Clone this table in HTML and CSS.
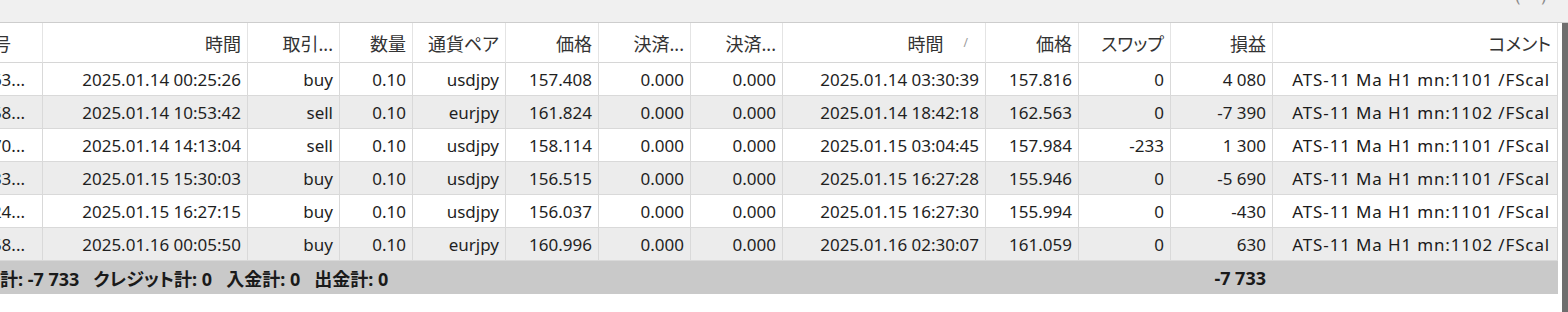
FILE: index.html
```html
<!DOCTYPE html>
<html lang="ja">
<head>
<meta charset="utf-8">
<title>口座履歴</title>
<link rel="stylesheet" href="styles.css">
</head>
<body>
<div class="topbar"><span class="topmark">(&nbsp;&nbsp;&nbsp;&nbsp;&nbsp;)</span></div>
<div class="view">
  <div class="grid">
    <div class="c h first">番号</div>
    <div class="c h">時間</div>
    <div class="c h">取引...</div>
    <div class="c h">数量</div>
    <div class="c h">通貨ペア</div>
    <div class="c h">価格</div>
    <div class="c h">決済...</div>
    <div class="c h">決済...</div>
    <div class="c h sorted">時間<span class="sort">/</span></div>
    <div class="c h">価格</div>
    <div class="c h">スワップ</div>
    <div class="c h">損益</div>
    <div class="c h">コメント</div>

    <div class="c first">63...</div><div class="c">2025.01.14 00:25:26</div><div class="c">buy</div><div class="c">0.10</div><div class="c">usdjpy</div><div class="c">157.408</div><div class="c">0.000</div><div class="c">0.000</div><div class="c">2025.01.14 03:30:39</div><div class="c">157.816</div><div class="c">0</div><div class="c">4 080</div><div class="c note">ATS-11 Ma H1 mn:1101 /FScal</div>

    <div class="c alt first">58...</div><div class="c alt">2025.01.14 10:53:42</div><div class="c alt">sell</div><div class="c alt">0.10</div><div class="c alt">eurjpy</div><div class="c alt">161.824</div><div class="c alt">0.000</div><div class="c alt">0.000</div><div class="c alt">2025.01.14 18:42:18</div><div class="c alt">162.563</div><div class="c alt">0</div><div class="c alt">-7 390</div><div class="c alt note">ATS-11 Ma H1 mn:1102 /FScal</div>

    <div class="c first">70...</div><div class="c">2025.01.14 14:13:04</div><div class="c">sell</div><div class="c">0.10</div><div class="c">usdjpy</div><div class="c">158.114</div><div class="c">0.000</div><div class="c">0.000</div><div class="c">2025.01.15 03:04:45</div><div class="c">157.984</div><div class="c">-233</div><div class="c">1 300</div><div class="c note">ATS-11 Ma H1 mn:1101 /FScal</div>

    <div class="c alt first">33...</div><div class="c alt">2025.01.15 15:30:03</div><div class="c alt">buy</div><div class="c alt">0.10</div><div class="c alt">usdjpy</div><div class="c alt">156.515</div><div class="c alt">0.000</div><div class="c alt">0.000</div><div class="c alt">2025.01.15 16:27:28</div><div class="c alt">155.946</div><div class="c alt">0</div><div class="c alt">-5 690</div><div class="c alt note">ATS-11 Ma H1 mn:1101 /FScal</div>

    <div class="c first">24...</div><div class="c">2025.01.15 16:27:15</div><div class="c">buy</div><div class="c">0.10</div><div class="c">usdjpy</div><div class="c">156.037</div><div class="c">0.000</div><div class="c">0.000</div><div class="c">2025.01.15 16:27:30</div><div class="c">155.994</div><div class="c">0</div><div class="c">-430</div><div class="c note">ATS-11 Ma H1 mn:1101 /FScal</div>

    <div class="c alt first">58...</div><div class="c alt">2025.01.16 00:05:50</div><div class="c alt">buy</div><div class="c alt">0.10</div><div class="c alt">eurjpy</div><div class="c alt">160.996</div><div class="c alt">0.000</div><div class="c alt">0.000</div><div class="c alt">2025.01.16 02:30:07</div><div class="c alt">161.059</div><div class="c alt">0</div><div class="c alt">630</div><div class="c alt note">ATS-11 Ma H1 mn:1102 /FScal</div>

    <div class="f summary"><span class="item">計: -7 733</span><span class="item">クレジット計: 0</span><span class="item">入金計: 0</span><span class="item">出金計: 0</span></div>
    <div class="f total">-7 733</div>
    <div class="f"></div>
  </div>
  <div class="gutter"></div>
  <div class="rail"></div>
</div>
</body>
</html>
```

FILE: styles.css
```css
html, body {
  margin: 0;
  padding: 0;
}
body {
  width: 1568px;
  height: 312px;
  overflow: hidden;
  background: #ffffff;
  font-family: "Noto Sans", "Noto Sans CJK JP", sans-serif;
  font-size: 17px;
  color: #1f1f1f;
  font-feature-settings: "palt";
}
.topbar {
  height: 22px;
  background: #f0f0f0;
  border-bottom: 1px solid #cdcdcd;
  display: flex;
  justify-content: flex-end;
  align-items: flex-start;
  padding-right: 22px;
  overflow: hidden;
}
.topmark {
  font-size: 16px;
  line-height: 16px;
  margin-top: -12px;
  color: #8a8a8a;
}
.view {
  display: flex;
  height: 289px;
}
.grid {
  width: 1558px;
  display: grid;
  grid-template-columns: 43px 205px 92px 73px 93px 93px 92px 92px 203px 93px 92px 102px 285px;
  grid-template-rows: 40px repeat(6, 33px) 33px;
  align-content: start;
}
.c {
  box-sizing: border-box;
  display: flex;
  align-items: center;
  justify-content: flex-end;
  padding-right: 6px;
  border-right: 1px solid #d9d9d9;
  border-bottom: 1px solid #d9d9d9;
  white-space: nowrap;
  overflow: hidden;
  background: #ffffff;
}
.c.alt {
  background: #ececec;
}
.c.note {
  letter-spacing: 0.85px;
  padding-right: 7px;
  color: #1a1a1a;
}
.c.h {
  color: #333333;
  font-size: 18px;
  border-right-color: #e4e4e4;
  border-bottom-color: #d6d6d6;
}
.c.first {
  padding-right: 17px;
}
.c.h.first {
  padding-right: 31px;
}
.c.sorted {
  padding-right: 17px;
}
.sort {
  font-size: 12px;
  color: #9a9a9a;
  margin-left: 20px;
}
.f {
  background: #c9c9c9;
  display: flex;
  align-items: center;
  font-weight: 700;
  font-size: 18px;
  color: #1a1a1a;
  white-space: nowrap;
  overflow: hidden;
}
.summary {
  grid-column: 1 / 12;
}
.item {
  margin-right: 14px;
}
.total {
  justify-content: flex-end;
  padding-right: 7px;
}
.gutter {
  width: 4px;
  background: #ffffff;
}
.rail {
  width: 6px;
  background: #6e6e6e;
}
```
